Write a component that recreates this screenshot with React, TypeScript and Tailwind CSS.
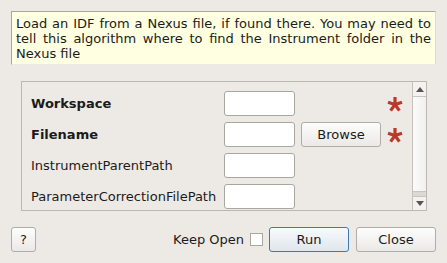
const Asterisk = () => (
  <svg width="16" height="16" viewBox="0 0 16 16" className="block">
    <g stroke="#b9392b" strokeWidth="3.2" strokeLinecap="butt">
      <line x1="8" y1="8.5" x2="8" y2="1" />
      <line x1="8" y1="8.5" x2="15" y2="6.2" />
      <line x1="8" y1="8.5" x2="1" y2="6.2" />
      <line x1="8" y1="8.5" x2="12.4" y2="14.6" />
      <line x1="8" y1="8.5" x2="3.6" y2="14.6" />
    </g>
  </svg>
);

const Field = () => (
  <div className="w-[71px] h-[25px] border border-[#aaa7a3] rounded-[3px] bg-white shrink-0" />
);

const btn =
  "h-[25px] border border-[#b0aca7] rounded-[3px] bg-linear-to-b from-[#fdfdfd] to-[#ebe9e6] flex items-center justify-center shrink-0";

const rows = [
  { label: "Workspace", bold: true, browse: false, required: true },
  { label: "Filename", bold: true, browse: true, required: true },
  { label: "InstrumentParentPath", bold: false, browse: false, required: false },
  { label: "ParameterCorrectionFilePath", bold: false, browse: false, required: false },
];

export default function App() {
  return (
    <div className="w-[447px] h-[263px] bg-[#edeae6] font-['DejaVu_Sans',sans-serif] text-[13px] text-[#1b1b1b] pt-[11px] px-[11px] flex flex-col overflow-hidden">
      <div className="h-[54px] border border-t-[#a9a5a1] border-l-[#a9a5a1] border-r-[#dcd9d5] border-b-[#edeae6] bg-[#ffffe1] px-[4px] py-[4px] leading-[15px] text-justify">
        Load an IDF from a Nexus file, if found there. You may need to tell this algorithm where to find the Instrument folder in the Nexus file
      </div>

      <div className="mt-[16px] ml-[10px] w-[406px] h-[130px] border border-[#bbb7b3] flex">
        <div className="flex-1 overflow-hidden pl-[9px] pt-[9px] flex flex-col gap-[6px]">
          {rows.map((r) => (
            <div key={r.label} className="h-[25px] flex items-center shrink-0">
              <div className={`w-[193px] shrink-0 ${r.bold ? "font-bold" : ""}`}>{r.label}</div>
              <Field />
              {r.browse ? (
                <div className={`${btn} ml-[6px] w-[80px]`}>Browse</div>
              ) : (
                <div className="ml-[6px] w-[80px] shrink-0" />
              )}
              <div className="ml-[6px] w-[16px] shrink-0">{r.required && <Asterisk />}</div>
            </div>
          ))}
        </div>
        <div className="w-[14px] border-l border-[#c4c0bc] flex flex-col bg-[#f3f2f0]">
          <div className="h-[15px] border-b border-[#c8c5c1] flex items-center justify-center shrink-0">
            <svg width="8" height="5" viewBox="0 0 8 5">
              <path d="M0 5 L4 0 L8 5 Z" fill="#555" />
            </svg>
          </div>
          <div className="flex-1 bg-linear-to-r from-[#fbfbfb] to-[#f1f0ee]" />
          <div className="h-[5px] bg-[#dcd9d5] border-t border-[#c8c5c1] shrink-0" />
          <div className="h-[14px] border-t border-[#c8c5c1] flex items-center justify-center shrink-0">
            <svg width="8" height="5" viewBox="0 0 8 5">
              <path d="M0 0 L8 0 L4 5 Z" fill="#555" />
            </svg>
          </div>
        </div>
      </div>

      <div className="mt-[16px] h-[25px] flex items-center">
        <div className={`${btn} w-[25px]`}>?</div>
        <div className="flex-1" />
        <span>Keep Open</span>
        <div className="ml-[6px] w-[13px] h-[13px] border border-[#aaa7a3] bg-white shrink-0" />
        <div className="ml-[6px] w-[80px] h-[25px] border border-[#3d7aad] rounded-[3px] bg-linear-to-b from-[#f8fafc] to-[#e0e6ec] flex items-center justify-center shrink-0">
          Run
        </div>
        <div className={`${btn} ml-[7px] w-[80px]`}>Close</div>
      </div>
    </div>
  );
}
